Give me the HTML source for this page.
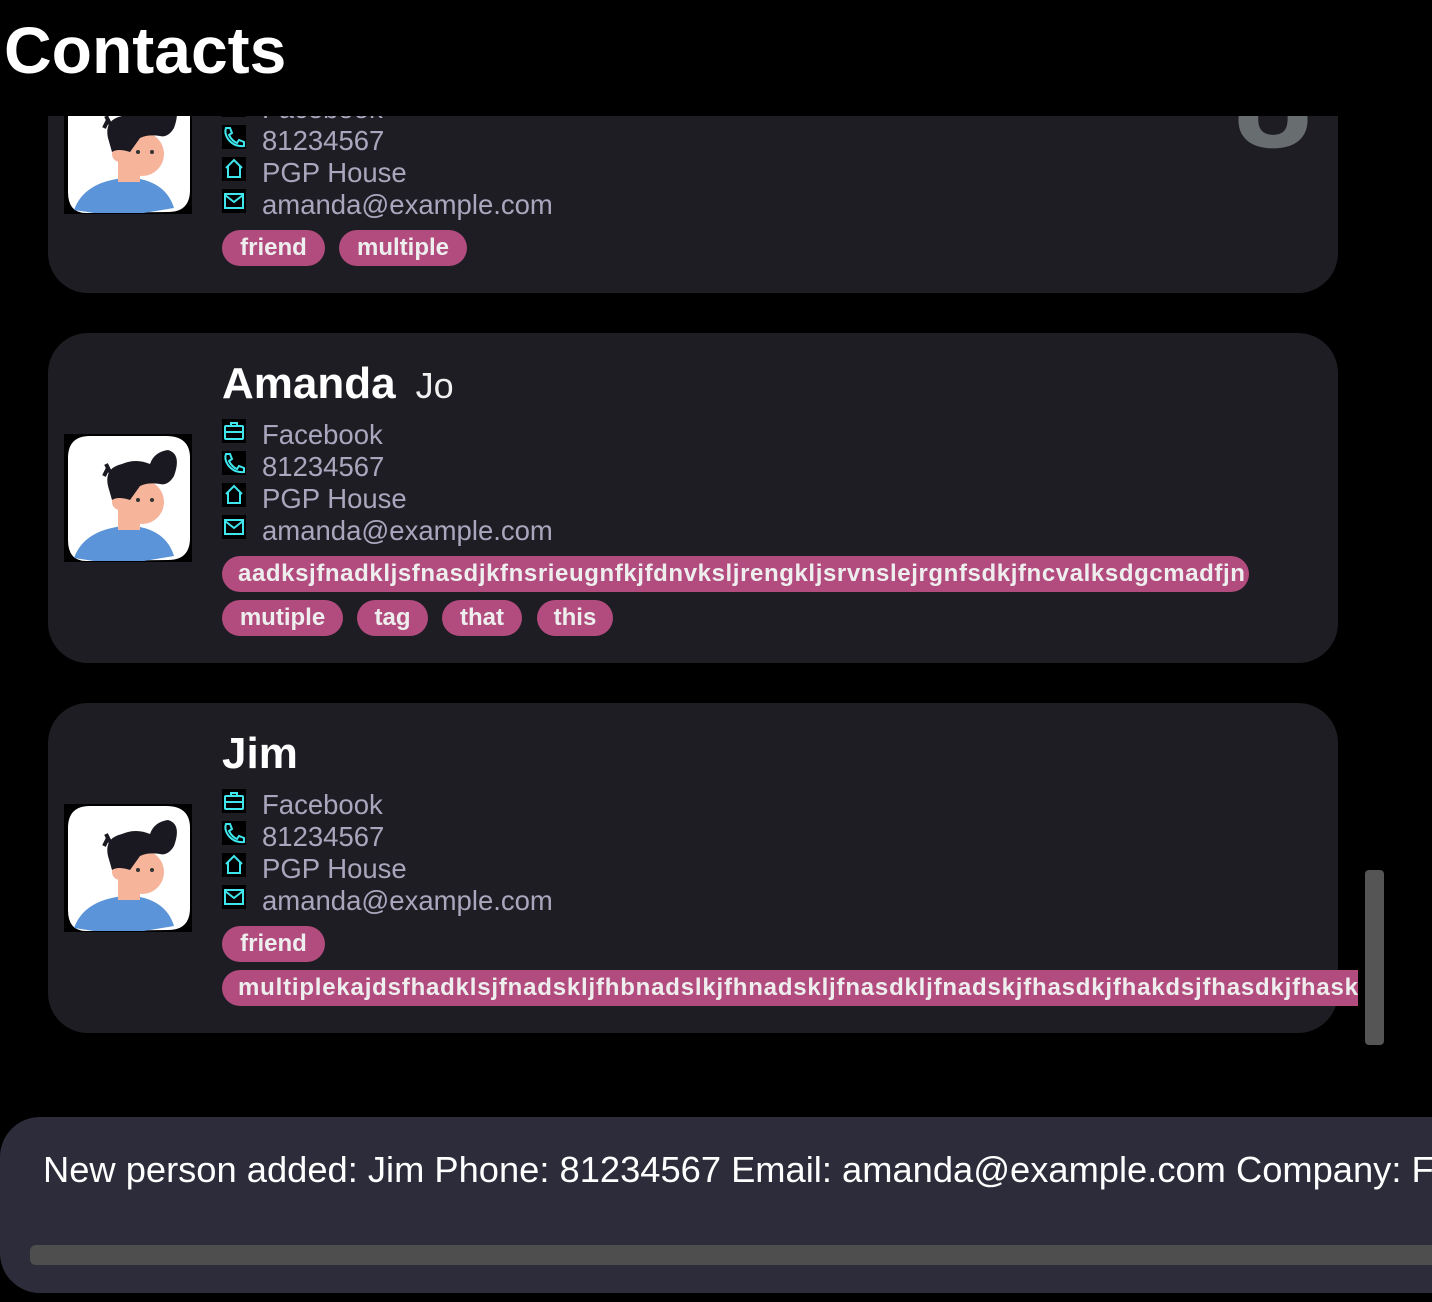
<!DOCTYPE html>
<html><head><meta charset="utf-8"><style>
*{margin:0;padding:0;box-sizing:border-box}
body{width:1432px;height:1302px;background:#000;overflow:hidden;position:relative;font-family:"Liberation Sans",sans-serif}
.h{position:absolute;left:4px;top:12px;font-size:66px;font-weight:bold;color:#fff}
.list{position:absolute;left:0;top:116px;width:1358px;height:960px;overflow:hidden}
.card{position:absolute;left:48px;width:1290px;background:#1e1d23;border-radius:40px}
.av{position:absolute;left:16px;width:128px;height:128px;background:#000}
.name{position:absolute;left:174px;font-size:44px;font-weight:bold;color:#fff}
.name span{font-weight:normal;font-size:36px;margin-left:20px;color:#f0f0f0}
.ln{position:absolute;left:214px;font-size:27.5px;color:#a9a6bd;line-height:32px;white-space:nowrap}
.ic{position:absolute;left:174px;width:24px;height:24px;background:#000}
.tag{position:absolute;height:36px;background:#b24c7e;border-radius:18px;color:#eee;font-weight:bold;font-size:24px;line-height:36px;text-align:center;white-space:nowrap;overflow:hidden}
.idx{position:absolute;font-size:140px;font-weight:bold;color:#686d70;line-height:1}
</style></head><body>
<div class="h">Contacts</div>
<svg width="0" height="0" style="position:absolute">
<defs>
<g id="avatar"><rect width="128" height="128" fill="#000"/><path d="M4 24 Q4 2 26 2 L102 2 Q126 2 126 24 L126 104 Q126 126 104 126 L24 127 Q4 128 4 106Z" fill="#fff"/>
<path d="M10 124 Q20 96 60 92 L70 92 Q102 96 110 122 L80 127 L30 127Z" fill="#5b94d8"/>
<rect x="54" y="72" width="22" height="24" fill="#f6b49b"/>
<ellipse cx="78" cy="68" rx="22" ry="22" fill="#f6b49b"/><circle cx="56" cy="68" r="8" fill="#f6b49b"/>
<path d="M44 52 Q40 34 58 30 Q72 24 86 30 Q90 18 104 16 Q118 20 110 42 Q104 52 96 50 Q84 48 76 52 L66 66 Q54 62 48 66Z" fill="#1a1820"/>
<path d="M40 42 L44 34 M46 38 L42 30" stroke="#1a1820" stroke-width="4"/>
<circle cx="74" cy="66" r="2" fill="#333"/><circle cx="88" cy="66" r="2" fill="#333"/>
</g>
<g id="brief" fill="none" stroke="#3fe6ee" stroke-width="2"><rect x="3" y="7" width="18" height="13" rx="1"/><path d="M9 7V4h6v3M3 13h18"/></g>
<g id="phone" fill="none" stroke="#3fe6ee" stroke-width="2"><path d="M4 3 L8 3 L10 8 L7 10 Q10 16 15 18 L17 15 L22 17 L22 21 Q12 22 6 14 Q2 8 4 3Z"/></g>
<g id="home" fill="none" stroke="#3fe6ee" stroke-width="2"><path d="M4 11 L12 3 L20 11 M6 9 V20 H18 V9"/></g>
<g id="mail" fill="none" stroke="#3fe6ee" stroke-width="2"><rect x="3" y="5" width="18" height="14"/><path d="M3 6 L12 13 L21 6"/></g>
</defs></svg>
<div class="list">
 <div class="card" style="top:-109px;height:286px">
  <div class="idx" style="left:1186px;top:22px">8</div>
  <svg class="av" style="top:79px" viewBox="0 0 128 128"><use href="#avatar"/></svg>
  <div class="ln" style="top:86px">Facebook</div>
  <svg class="ic" style="top:86px"><use href="#brief"/></svg>
  <div class="ln" style="top:118px">81234567</div>
  <svg class="ic" style="top:118px"><use href="#phone"/></svg>
  <div class="ln" style="top:150px">PGP House</div>
  <svg class="ic" style="top:150px"><use href="#home"/></svg>
  <div class="ln" style="top:182px">amanda@example.com</div>
  <svg class="ic" style="top:182px"><use href="#mail"/></svg>
  <div class="tag" style="left:174px;width:103px;top:223px">friend</div>
  <div class="tag" style="left:291px;width:128px;top:223px">multiple</div>
 </div>
 <div class="card" style="top:217px;height:330px">
  <div class="name" style="top:26px">Amanda<span>Jo</span></div>
  <svg class="av" style="top:101px" viewBox="0 0 128 128"><use href="#avatar"/></svg>
  <div class="ln" style="top:86px">Facebook</div>
  <svg class="ic" style="top:86px"><use href="#brief"/></svg>
  <div class="ln" style="top:118px">81234567</div>
  <svg class="ic" style="top:118px"><use href="#phone"/></svg>
  <div class="ln" style="top:150px">PGP House</div>
  <svg class="ic" style="top:150px"><use href="#home"/></svg>
  <div class="ln" style="top:182px">amanda@example.com</div>
  <svg class="ic" style="top:182px"><use href="#mail"/></svg>
  <div class="tag" style="left:174px;width:1027px;top:223px;text-align:left;padding-left:16px;letter-spacing:0.6px">aadksjfnadkljsfnasdjkfnsrieugnfkjfdnvksljrengkljsrvnslejrgnfsdkjfncvalksdgcmadfjn</div>
  <div class="tag" style="left:174px;width:121px;top:267px">mutiple</div>
  <div class="tag" style="left:309px;width:71px;top:267px">tag</div>
  <div class="tag" style="left:394px;width:80px;top:267px">that</div>
  <div class="tag" style="left:489px;width:76px;top:267px">this</div>
 </div>
 <div class="card" style="top:587px;height:330px">
  <div class="name" style="top:26px">Jim</div>
  <svg class="av" style="top:101px" viewBox="0 0 128 128"><use href="#avatar"/></svg>
  <div class="ln" style="top:86px">Facebook</div>
  <svg class="ic" style="top:86px"><use href="#brief"/></svg>
  <div class="ln" style="top:118px">81234567</div>
  <svg class="ic" style="top:118px"><use href="#phone"/></svg>
  <div class="ln" style="top:150px">PGP House</div>
  <svg class="ic" style="top:150px"><use href="#home"/></svg>
  <div class="ln" style="top:182px">amanda@example.com</div>
  <svg class="ic" style="top:182px"><use href="#mail"/></svg>
  <div class="tag" style="left:174px;width:103px;top:223px">friend</div>
  <div class="tag" style="left:174px;width:1136px;top:267px;text-align:left;padding-left:16px;letter-spacing:0.8px;border-radius:18px 0 0 18px">multiplekajdsfhadklsjfnadskljfhbnadslkjfhnadskljfnasdkljfnadskjfhasdkjfhakdsjfhasdkjfhaskdjf</div>
 </div>
</div>
<div style="position:absolute;left:1365px;top:870px;width:19px;height:175px;background:#555;border-radius:4px"></div>
<div style="position:absolute;left:0;top:1117px;width:1432px;height:176px;background:#2d2c3a;border-radius:40px 0 0 40px;overflow:hidden">
 <div style="position:absolute;left:43px;top:32px;font-size:36.3px;color:#fff;white-space:nowrap">New person added: Jim Phone: 81234567 Email: amanda@example.com Company: Facebook</div>
 <div style="position:absolute;left:30px;top:128px;width:1402px;height:20px;background:#4e4e4e;border-radius:6px 0 0 6px"></div>
</div>
</body></html>
